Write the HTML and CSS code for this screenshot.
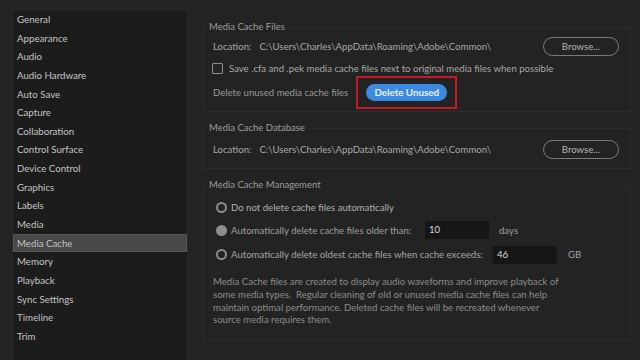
FILE: index.html
```html
<!DOCTYPE html>
<html>
<head>
<meta charset="utf-8">
<link rel="stylesheet" href="styles.css">
</head>
<body>
<div class="page">
  <nav class="sidebar">
    <div class="item">General</div>
    <div class="item">Appearance</div>
    <div class="item">Audio</div>
    <div class="item">Audio Hardware</div>
    <div class="item">Auto Save</div>
    <div class="item">Capture</div>
    <div class="item">Collaboration</div>
    <div class="item">Control Surface</div>
    <div class="item">Device Control</div>
    <div class="item">Graphics</div>
    <div class="item">Labels</div>
    <div class="item">Media</div>
    <div class="item active">Media Cache</div>
    <div class="item">Memory</div>
    <div class="item">Playback</div>
    <div class="item">Sync Settings</div>
    <div class="item">Timeline</div>
    <div class="item">Trim</div>
  </nav>
  <main class="content">
    <fieldset class="group g1">
      <legend>Media Cache Files</legend>
      <div class="row r-loc">
        <span class="label">Location:</span>
        <span class="path">C:\Users\Charles\AppData\Roaming\Adobe\Common\</span>
        <button class="browse">Browse...</button>
      </div>
      <div class="row r-check">
        <span class="checkbox"></span>
        <span>Save .cfa and .pek media cache files next to original media files when possible</span>
      </div>
      <div class="row r-del">
        <span>Delete unused media cache files</span>
        <span class="highlight"><button class="primary">Delete Unused</button></span>
      </div>
    </fieldset>
    <fieldset class="group g2">
      <legend>Media Cache Database</legend>
      <div class="row r-loc">
        <span class="label">Location:</span>
        <span class="path">C:\Users\Charles\AppData\Roaming\Adobe\Common\</span>
        <button class="browse">Browse...</button>
      </div>
    </fieldset>
    <fieldset class="group g3">
      <legend>Media Cache Management</legend>
      <div class="row r-radio1">
        <span class="radio"></span>
        <span>Do not delete cache files automatically</span>
      </div>
      <div class="row r-radio2">
        <span class="radio filled"></span>
        <span class="opt2">Automatically delete cache files older than:</span>
        <span class="field f-days">10</span>
        <span class="unit">days</span>
      </div>
      <div class="row r-radio3">
        <span class="radio"></span>
        <span class="opt3">Automatically delete oldest cache files when cache exceeds:</span>
        <span class="field f-gb">46</span>
        <span class="unit unit-gb">GB</span>
      </div>
      <p class="note">Media Cache files are created to display audio waveforms and improve playback of<br>some media types.&nbsp; Regular cleaning of old or unused media cache files can help<br>maintain optimal performance. Deleted cache files will be recreated whenever<br>source media requires them.</p>
    </fieldset>
  </main>
</div>
</body>
</html>
```

FILE: styles.css
```css
html, body {
  margin: 0;
  padding: 0;
  height: 100%;
  background: #232323;
  overflow: hidden;
}
body {
  font-family: Lato, "Open Sans", sans-serif;
  font-size: 9.6px;
  color: #b4b4b4;
}
.page {
  display: flex;
  height: 360px;
}
.sidebar {
  margin: 9px 0 0 12px;
  width: 176px;
  box-sizing: border-box;
  background: #1c1c1c;
  border: 1px solid #2a2a2a;
  border-bottom: none;
  flex: none;
}
.item {
  height: 18.65px;
  line-height: 18.65px;
  padding-left: 4px;
  font-size: 9.7px;
  color: #c4c4c4;
}
.item.active {
  background: #484848;
  box-shadow: inset 0 0 0 1px #555;
}
.content {
  margin-left: 15px;
  width: 428px;
  padding-top: 20px;
  flex: none;
}
.group {
  margin: 0;
  padding: 0 11px 0 9px;
  border: 1px solid #2d2d2d;
  min-width: 0;
}
.group legend {
  padding: 0 4px 0 5px;
  margin-left: -9px;
  line-height: 14px;
  height: 14px;
  color: #9c9c9c;
  font-size: 9.5px;
}
.g2, .g3 {
  margin-top: 9px;
}
.g1 { padding-top: 1px; padding-bottom: 7px; }
.g2 { padding-top: 3px; padding-bottom: 8px; }
.g3 { padding-top: 4px; padding-bottom: 12px; }
.row {
  display: flex;
  align-items: center;
  white-space: nowrap;
}
.r-loc { height: 22px; color: #a8a8a8; }
.r-loc .label { margin-right: 8px; }
.r-loc .browse { margin-left: auto; }
.browse {
  width: 76px;
  height: 19px;
  border: 1.5px solid #7c7c7c;
  border-radius: 10px;
  background: transparent;
  color: #b4b4b4;
  font-family: inherit;
  font-size: 9.6px;
  padding: 0;
}
.r-check { height: 23px; color: #a8a8a8; }
.checkbox {
  width: 9px;
  height: 9px;
  border: 1px solid #8c8c8c;
  border-radius: 1px;
  margin-right: 6px;
  margin-left: -1px;
}
.r-del { height: 24px; color: #9a9a9a; }
.highlight {
  margin: -4px 0 -4px 8px;
  border: 2px solid #c41a28;
  padding: 6px 8px;
  display: flex;
}
.primary {
  width: 81px;
  height: 17px;
  border: none;
  border-radius: 9px;
  background: #3b8ae2;
  color: #f0f0f0;
  font-family: inherit;
  font-size: 9.8px;
  font-weight: bold;
  padding: 0;
}
.r-radio1 { height: 22px; color: #b0b0b0; }
.r-radio2 { height: 24px; color: #9e9e9e; }
.r-radio3 { height: 25px; color: #a4a4a4; }
.radio {
  width: 7px;
  height: 7px;
  border: 2px solid #8c8c8c;
  border-radius: 50%;
  margin: 0 4px 0 3px;
  flex: none;
}
.radio.filled {
  background: #8e8e8e;
  border-color: #8e8e8e;
}
.field {
  width: 60px;
  height: 18px;
  line-height: 18px;
  background: #161616;
  color: #d6d6d6;
  padding-left: 4px;
}
.opt2 { width: 194px; }
.opt3 { width: 262px; }
.unit { margin-left: 10px; }
.unit-gb { margin-left: 11px; }
.note {
  margin: 9px 0 0 0;
  line-height: 12.8px;
  color: #8c8c8c;
  white-space: nowrap;
}
```
